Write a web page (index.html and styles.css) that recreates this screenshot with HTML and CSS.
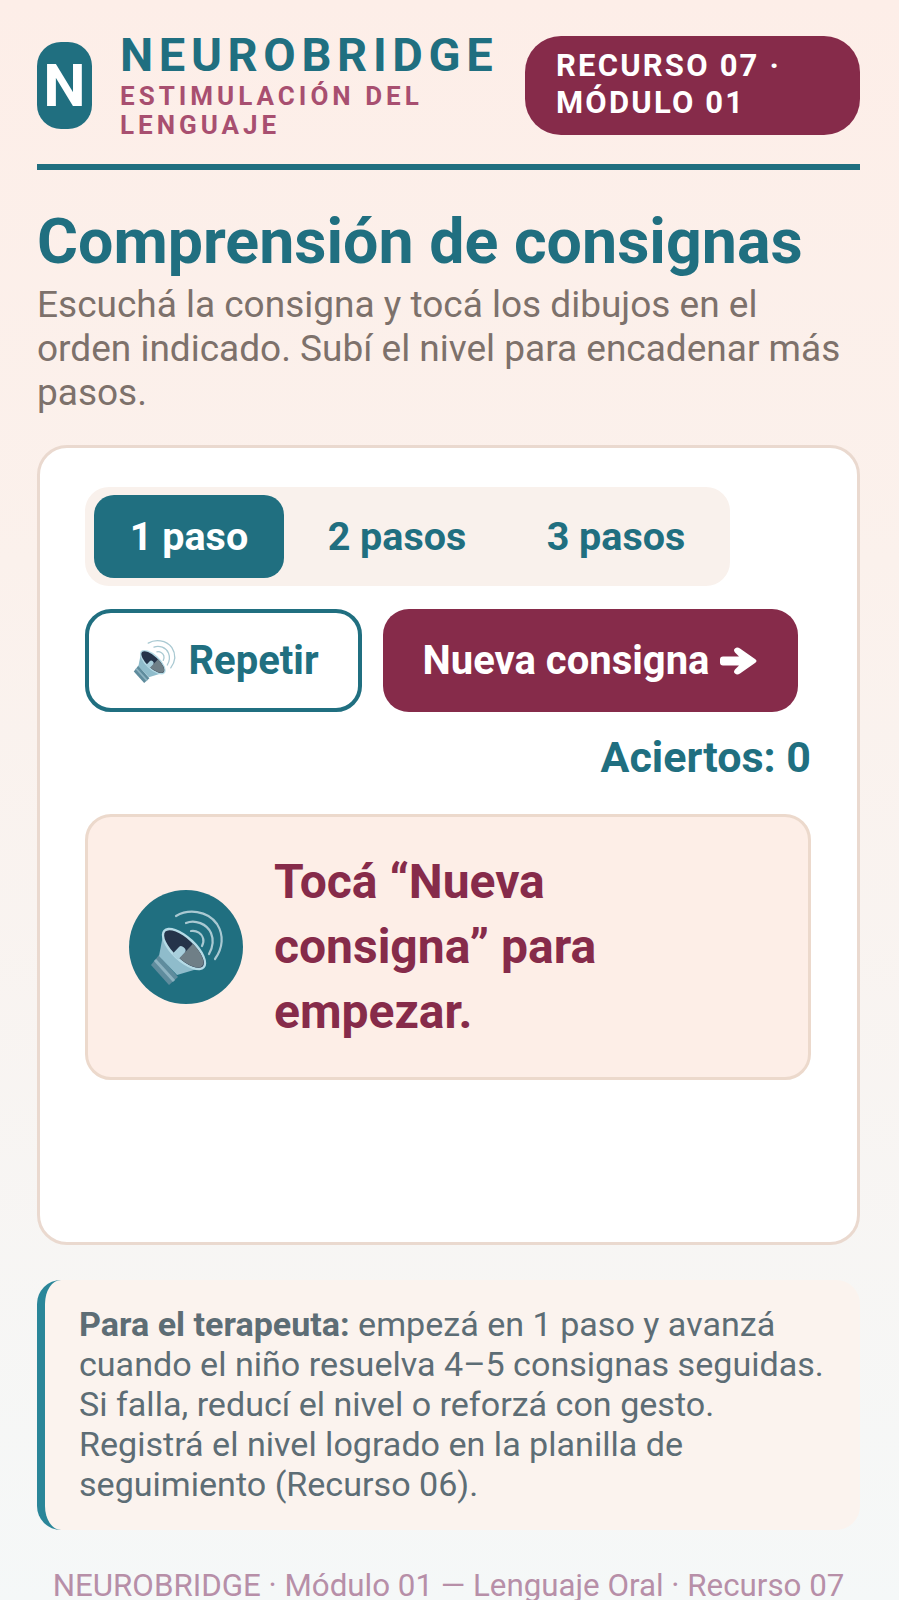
FILE: index.html
```html
<!DOCTYPE html>
<html lang="es">
<head>
<meta charset="utf-8">
<title>Comprensión de consignas</title>
<link rel="stylesheet" href="styles.css">
</head>
<body>
<svg class="defs" width="0" height="0" aria-hidden="true">
  <symbol id="speaker" viewBox="0 0 90 90">
    <g fill="none" stroke="#a9c9d2" stroke-width="2.200" stroke-linecap="round">
      <path d="M35 14C47 7 66 8 76 22C83 33 82 46 74 57"/>
      <path d="M45 21C54 17 66 22 70 31C73 38 72 45 68 52"/>
      <path d="M50 29C56 28 61 32 62 36C63 39 62 42 61 44"/>
    </g>
    <path d="M18 53L10 63L28 83L37 75Z" fill="#5f8c9d"/>
    <path d="M14 58L33 79" stroke="#8db3c1" stroke-width="3"/>
    <path d="M23 28L18 54L36 73L63 65Z" fill="#8fbccb"/>
    <g transform="translate(43 47) rotate(43)">
      <ellipse rx="28" ry="12.500" fill="#b5dbe6"/>
      <ellipse rx="25.500" ry="10" fill="#25344a"/>
      <path d="M3 -9.900A25.500 10 0 0 1 3 9.900Z" fill="#6f7f87"/>
      <path d="M-5 12V2Q-5 -1 -1 -1Q3 -1 3 2V12Z" fill="#a8cfdc"/>
    </g>
  </symbol>
</svg>
<div class="page">
  <header class="top">
    <div class="logo">N</div>
    <div class="brand">
      <div class="brand-name">NEUROBRIDGE</div>
      <div class="brand-sub">ESTIMULACIÓN DEL LENGUAJE</div>
    </div>
    <div class="badge">RECURSO 07 · MÓDULO 01</div>
  </header>

  <h1 class="title">Comprensión de consignas</h1>
  <p class="lead">Escuchá la consigna y tocá los dibujos en el orden indicado. Subí el nivel para encadenar más pasos.</p>

  <section class="card">
    <div class="tabs">
      <button class="tab tab-active">1 paso</button>
      <button class="tab">2 pasos</button>
      <button class="tab tab-last">3 pasos</button>
    </div>
    <div class="actions">
      <button class="btn btn-outline"><svg class="icon-small"><use href="#speaker"/></svg>Repetir</button>
      <button class="btn btn-solid">Nueva consigna<svg class="arrow" viewBox="0 0 38 28"><path d="M3 9.500H19L15 5.500Q13 3 15 1.500Q17 -0.500 20 1.500L35 12Q38 14 35 16L20 26.500Q17 28.500 15 26.500Q13 25 15 22.500L19 18.500H3Q0 18.500 0 15.500V12.500Q0 9.500 3 9.500Z" fill="currentColor"/></svg></button>
    </div>
    <div class="score">Aciertos: 0</div>
    <div class="prompt">
      <div class="prompt-icon"><svg class="icon-large"><use href="#speaker"/></svg></div>
      <div class="prompt-text">Tocá “Nueva consigna” para empezar.</div>
    </div>
  </section>

  <aside class="note"><strong>Para el terapeuta:</strong> empezá en 1 paso y avanzá cuando el niño resuelva 4–5 consignas seguidas. Si falla, reducí el nivel o reforzá con gesto. Registrá el nivel logrado en la planilla de seguimiento (Recurso 06).</aside>

  <footer class="foot">NEUROBRIDGE · Módulo 01 — Lenguaje Oral · Recurso 07</footer>
</div>
</body>
</html>
```

FILE: styles.css
```css
* { box-sizing: border-box; }
html, body { margin: 0; padding: 0; }
body {
  width: 899px;
  min-height: 1600px;
  overflow: hidden;
  background: linear-gradient(180deg, #fdeee8 0%, #fbf1ec 35%, #f5f8f8 100%);
  font-family: Roboto, "Liberation Sans", sans-serif;
}
.defs { position: absolute; }
.page { padding: 36px 39px 0 37px; }

.top {
  display: flex;
  align-items: flex-start;
  height: 134px;
  border-bottom: 6px solid #206f80;
}
.logo {
  flex: 0 0 55px;
  height: 87px;
  margin-top: 6px;
  border-radius: 24px;
  background: #206f80;
  color: #fff;
  font-size: 60px;
  font-weight: 700;
  display: flex;
  align-items: center;
  justify-content: center;
}
.brand { flex: 0 0 405px; margin-left: 28px; }
.brand-name {
  font-size: 47px;
  line-height: 38px;
  font-weight: 700;
  letter-spacing: 5.67px;
  color: #206f80;
}
.brand-sub {
  margin-top: 8px;
  font-size: 26px;
  line-height: 29px;
  font-weight: 700;
  letter-spacing: 4px;
  color: #a84f70;
}
.badge {
  margin-left: auto;
  width: 335px;
  height: 99px;
  padding: 11px 31px;
  border-radius: 36px;
  background: #862b4a;
  color: #fff;
  font-size: 31px;
  line-height: 37px;
  font-weight: 700;
  letter-spacing: 2.2px;
}

.title {
  margin: 37px 0 0;
  font-size: 62.7px;
  line-height: 70px;
  font-weight: 700;
  color: #206f80;
}
.lead {
  margin: 6px 0 0;
  font-size: 37px;
  line-height: 44px;
  color: #7d716b;
}

.card {
  margin-top: 30px;
  height: 800px;
  padding: 39px 46px 39px 45px;
  border: 3px solid #ead9cf;
  border-radius: 30px;
  background: #fff;
}
.tabs {
  display: inline-flex;
  gap: 8px;
  padding: 8px 8px 8px 9px;
  border-radius: 24px;
  background: #f9f1ec;
}
.tab {
  width: 210px;
  height: 83px;
  padding: 0;
  border: 0;
  border-radius: 20px;
  background: transparent;
  color: #206f80;
  font: 700 39.5px Roboto, sans-serif;
}
.tab-active { width: 190px; background: #206f80; color: #fff; }
.tab-last { width: 212px; }

.actions { display: flex; gap: 21px; margin-top: 23px; }
.btn {
  height: 103px;
  border-radius: 26px;
  font: 700 40px Roboto, sans-serif;
  display: flex;
  align-items: center;
  justify-content: center;
}
.btn-outline {
  width: 277px;
  border: 4px solid #206f80;
  background: #fff;
  color: #206f80;
}
.btn-solid {
  width: 415px;
  border: 0;
  background: #862b4a;
  color: #fff;
}
.icon-small { width: 52px; height: 52px; margin-right: 8px; }
.arrow { width: 38px; height: 28px; margin-left: 11px; }

.score {
  margin-top: 22px;
  text-align: right;
  font-size: 43px;
  line-height: 46px;
  font-weight: 700;
  color: #206f80;
}
.prompt {
  margin-top: 34px;
  height: 266px;
  padding: 0 40px 0 41px;
  display: flex;
  align-items: center;
  border: 3px solid #ecd9cc;
  border-radius: 26px;
  background: #fdeee7;
}
.prompt-icon {
  flex: 0 0 114px;
  height: 114px;
  border-radius: 50%;
  background: #206f80;
  display: flex;
  align-items: center;
  justify-content: center;
}
.icon-large { width: 90px; height: 90px; }
.prompt-text {
  margin-left: 31px;
  padding-bottom: 2px;
  width: 400px;
  font-size: 48px;
  line-height: 65px;
  font-weight: 700;
  color: #862b4a;
}

.note {
  margin-top: 35px;
  height: 250px;
  padding: 24px 30px 0 34px;
  border-left: 8px solid #2a8699;
  border-radius: 24px;
  background: #fbf3ee;
  font-size: 34.1px;
  line-height: 40px;
  color: #5d6d75;
}
.note strong { font-weight: 700; }

.foot {
  margin-top: 38px;
  text-align: center;
  font-size: 31.3px;
  line-height: 36px;
  color: #b78fa8;
  white-space: nowrap;
}
```
